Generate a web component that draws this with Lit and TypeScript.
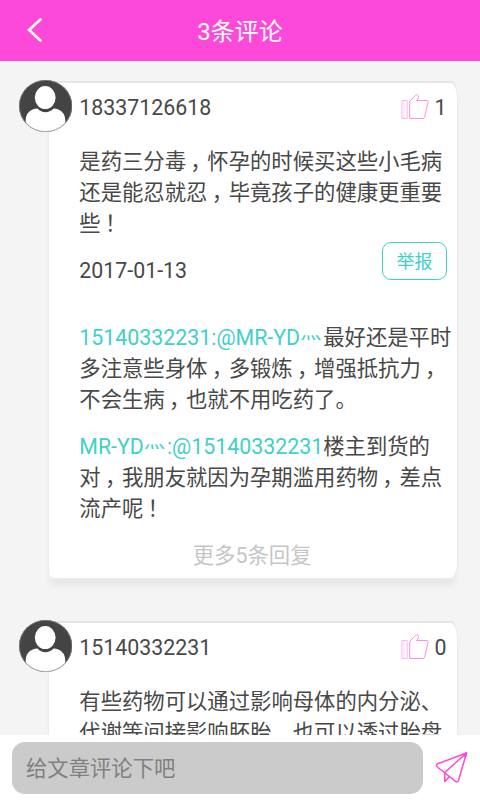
import { LitElement, html, css, svg } from "lit";
import { customElement, property } from "lit/decorators.js";

interface Line {
  name?: string;
  text: string;
}

interface Comment {
  user: string;
  likes: number;
  body: Line[];
  date?: string;
  replies: Line[][];
  more?: string;
}

const comments: Comment[] = [
  {
    user: "18337126618",
    likes: 1,
    body: [
      { text: "是药三分毒，怀孕的时候买这些小毛病" },
      { text: "还是能忍就忍，毕竟孩子的健康更重要" },
      { text: "些！" },
    ],
    date: "2017-01-13",
    replies: [
      [
        { name: "15140332231:@MR-YD灬", text: "最好还是平时" },
        { text: "多注意些身体，多锻炼，增强抵抗力，" },
        { text: "不会生病，也就不用吃药了。" },
      ],
      [
        { name: "MR-YD灬:@15140332231", text: "楼主到货的" },
        { text: "对，我朋友就因为孕期滥用药物，差点" },
        { text: "流产呢！" },
      ],
    ],
    more: "更多5条回复",
  },
  {
    user: "15140332231",
    likes: 0,
    body: [
      { text: "有些药物可以通过影响母体的内分泌、" },
      { text: "代谢等间接影响胚胎，也可以透过胎盘" },
    ],
    replies: [],
  },
];

const glyphs = (text: string) =>
  text
    .split(/([，！灬])/)
    .filter((part) => part)
    .map((part) =>
      part === "，" || part === "！"
        ? html`<span class="mark">${part}</span>`
        : part === "灬"
          ? html`<span class="dots">灬</span>`
          : part
    );

const line = (l: Line) =>
  html`<div class="line">${l.name ? html`<span class="name">${glyphs(l.name)}</span>` : ""}${glyphs(l.text)}</div>`;

const avatarIcon = svg`
  <svg class="avatar" viewBox="0 0 54 54">
    <defs><clipPath id="disc"><ellipse cx="27.600" cy="26" rx="26.600" ry="26" /></clipPath></defs>
    <ellipse cx="27.600" cy="26" rx="26.600" ry="26" fill="#444" />
    <g clip-path="url(#disc)">
      <path d="M7.700 54V40.500C7.700 33 12.500 29 19.500 28.500C24 33.500 31 33.500 35.500 28.500C42.500 29 47.300 33 47.300 40.500V54Z" fill="#fff" />
      <ellipse cx="27.200" cy="17.600" rx="10.400" ry="11.500" fill="#fff" />
    </g>
    <ellipse cx="27.600" cy="26" rx="26.200" ry="25.600" fill="none" stroke="#85858e" stroke-width=".7" />
  </svg>`;

const likeIcon = svg`
  <svg class="like" viewBox="0 0 28 26" fill="none" stroke="#fb8fe8" stroke-width="1" stroke-linejoin="round">
    <path d="M.9 6.500H6.200V24.500H.9Z" stroke="#fcb5ef" />
    <path d="M2.800 7V24" stroke="#fddaf7" />
    <path d="M8.700 24.500V7.500L13.500 2.300C14.800 .9 16.300 .3 17.200 1.500C18 2.700 17.500 4.500 15.500 6.500H26C27 6.500 27.300 7.200 27.100 8L23.800 22.500C23.500 24 23 24.500 22 24.500Z" />
  </svg>`;

@customElement("comment-card")
export class CommentCard extends LitElement {
  @property({ attribute: false }) comment!: Comment;

  static styles = css`
    :host {
      display: grid;
      grid-template-columns: 30px 410px;
      padding-left: 18px;
    }
    .avatar {
      display: block;
      width: 54px;
      height: 54px;
      position: relative;
      z-index: 1;
    }
    .card {
      box-sizing: border-box;
      margin-top: 1px;
      padding: 0 0 0 30.300px;
      background: #fff;
      border: 1px solid #ebebeb;
      border-top: 2px solid #e6e6e6;
      border-radius: 6px 7px 7px 6px / 6px 18px 18px 6px;
      box-shadow: 0 9px 5px -2px #e8e8e8;
    }
    .head {
      display: flex;
      align-items: center;
      height: 49px;
      padding-right: 10.500px;
    }
    .user {
      flex: 1;
    }
    .like {
      width: 28px;
      height: 26px;
      margin: -1px 5.500px 0 0;
    }
    .body {
      padding-top: 13.500px;
    }
    .line {
      height: 31px;
      line-height: 31px;
      white-space: nowrap;
    }
    .mark {
      padding: 0 0.3em 0 0.2em;
      font-feature-settings: "halt";
    }
    .name {
      color: #40d0c8;
    }
    .dots {
      display: inline-block;
      height: 31px;
      padding-right: 1.800px;
      vertical-align: top;
      transform: translateY(-5px) scaleY(0.8);
    }
    .meta {
      display: flex;
      justify-content: space-between;
      padding-right: 10px;
      height: 45px;
    }
    .date {
      line-height: 64px;
    }
    .report {
      box-sizing: border-box;
      width: 65px;
      height: 38px;
      margin-top: 3px;
      border: 1px solid #40d0c8;
      border-radius: 9px;
      color: #40d0c8;
      font-size: 18px;
      line-height: 38px;
      text-align: center;
    }
    .replies {
      display: flex;
      flex-direction: column;
      gap: 16px;
      padding-top: 38px;
    }
    .more {
      padding: 16.500px 32px 7px 0;
      height: 31px;
      line-height: 31px;
      text-align: center;
      color: #c6c6c6;
    }
  `;

  render() {
    const c = this.comment;
    return html`
      ${avatarIcon}
      <div class="card">
        <div class="head">
          <span class="user">${c.user}</span>
          ${likeIcon}
          <span>${c.likes}</span>
        </div>
        <div class="body">${c.body.map(line)}</div>
        ${c.date
          ? html`<div class="meta"><span class="date">${c.date}</span><span class="report">举报</span></div>`
          : ""}
        ${c.replies.length
          ? html`<div class="replies">${c.replies.map((r) => html`<div class="reply">${r.map(line)}</div>`)}</div>`
          : ""}
        ${c.more ? html`<div class="more">${c.more}</div>` : ""}
      </div>
    `;
  }
}

@customElement("app-root")
export class AppRoot extends LitElement {
  static styles = css`
    :host {
      display: flex;
      flex-direction: column;
      width: 480px;
      height: 800px;
      overflow: hidden;
      background: #f4f4f4;
      color: #484848;
      font: 21.350px Roboto, "Noto Sans CJK SC", sans-serif;
    }
    .header {
      display: grid;
      grid-template-columns: 60px 1fr 60px;
      align-items: center;
      height: 61px;
      flex: none;
      background: #fd49da;
      color: #fff;
      font-size: 24px;
      text-align: center;
    }
    .title {
      padding-bottom: 2px;
    }
    .back {
      width: 60px;
      height: 61px;
    }
    .list {
      flex: 1;
      min-height: 0;
      overflow: hidden;
      display: flex;
      flex-direction: column;
      gap: 41px;
      padding-top: 19px;
    }
    comment-card {
      flex: none;
    }
    .composer {
      box-sizing: border-box;
      flex: none;
      display: flex;
      align-items: center;
      height: 65px;
      padding: 1px 0 0 12px;
      gap: 12px;
      background: #fff;
    }
    .input {
      box-sizing: border-box;
      flex: none;
      width: 411px;
      height: 52px;
      padding-left: 14px;
      border-radius: 13px;
      background: #cbcbcb;
      color: #808080;
      line-height: 54px;
    }
    .send {
      flex: none;
      width: 34px;
      height: 34px;
    }
  `;

  render() {
    return html`
      <div class="header">
        <svg class="back" viewBox="0 0 60 61" fill="none" stroke="#fff" stroke-width="2.600" stroke-linecap="round">
          <path d="M40.500 19.500L29 30L40.500 40.500" />
        </svg>
        <span class="title">3条评论</span>
      </div>
      <div class="list">
        ${comments.map((c) => html`<comment-card .comment=${c}></comment-card>`)}
      </div>
      <div class="composer">
        <div class="input">给文章评论下吧</div>
        <svg class="send" viewBox="0 0 34 34" fill="none" stroke="#fd49da" stroke-width="1.500" stroke-linejoin="round">
          <path d="M31.500 2L2.800 12.800C1 13.600 1 15 2.300 16L20.500 30.300C22 31.200 23 30.800 23.500 29.500Z" />
          <path d="M31.500 2L9.800 21.500V30.500L14.300 25.800" />
          <path d="M28 3.500L31.500 2L30.500 6Z" fill="#fd49da" />
        </svg>
      </div>
    `;
  }
}
